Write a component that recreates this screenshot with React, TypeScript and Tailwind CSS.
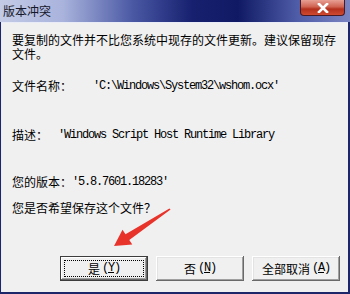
import React from "react";

const cjk = "font-['SimSun','Noto_Sans_CJK_SC',sans-serif]";
const mono = "font-['Liberation_Mono',monospace] tracking-[-1.2px]";

function Btn({ label, hot, isDefault }: { label: string; hot: string; isDefault?: boolean }) {
  return (
    <button
      className={`relative w-[88px] h-[25px] bg-[#f0f0f0] text-[12px] leading-[13px] text-black flex items-center justify-center ${
        isDefault
          ? "border border-[#3c3c3c] shadow-[inset_-1px_-1px_0_#696969,inset_1px_1px_0_#ffffff,inset_-2px_-2px_0_#a0a0a0]"
          : "shadow-[inset_-1px_-1px_0_#696969,inset_1px_1px_0_#ffffff,inset_-2px_-2px_0_#a0a0a0,inset_2px_2px_0_#e3e3e3]"
      }`}
    >
      {isDefault && (
        <span className="absolute inset-[3px] border border-dotted border-black pointer-events-none" />
      )}
      <span className={cjk}>{label}</span>
      <span className={`${mono} ml-[2px]`}>
        (<span className="underline">{hot}</span>)
      </span>
    </button>
  );
}

export default function App() {
  return (
    <div className={`relative w-[350px] h-[294px] overflow-hidden bg-[#1c2668] flex flex-col ${cjk}`}>
      {/* title bar */}
      <div className="h-[22px] flex justify-between bg-[linear-gradient(90deg,#c3cbe6_0%,#a9b3dc_18%,#4a58a4_38%,#16206e_55%,#101a64_68%,#4f5ca8_85%,#7a84c2_100%)]">
        <div className="pl-[3px] pt-[4px] text-[12px] leading-[14px] text-[#15182a]">版本冲突</div>
        <div className="mr-[5px] w-[45px] h-[16px] rounded-b-[4px] border border-t-0 border-[#4a1a24] bg-[linear-gradient(180deg,#e7a094_0%,#d06352_45%,#b3301d_60%,#cf4a30_100%)] flex items-center justify-center">
          <svg width="12" height="10" viewBox="0 0 12 10">
            <path d="M2 1 L10 9 M10 1 L2 9" stroke="#ffffff" strokeWidth="2.6" strokeLinecap="square" />
          </svg>
        </div>
      </div>

      {/* body */}
      <div className="flex-1 ml-[1px] mr-[2px] mb-[2px] bg-[#f0f0f0] border-l border-t border-[#e9ecf6] flex flex-col pl-[10px] pr-[8px] pt-[10px] text-[12px] leading-[14px] text-black">
        <div>要复制的文件并不比您系统中现存的文件更新。建议保留现存</div>
        <div>文件。</div>
        <div className="mt-[18px] flex">
          <span className="w-[81px]">文件名称：</span>
          <span className={mono}>{"'C:\\Windows\\System32\\wshom.ocx'"}</span>
        </div>
        <div className="mt-[35px] flex">
          <span className="w-[46px]">描述：</span>
          <span className={mono}>'Windows Script Host Runtime Library</span>
        </div>
        <div className="mt-[33px] flex">
          <span className="w-[60px]">您的版本：</span>
          <span className={mono}>'5.8.7601.18283'</span>
        </div>
        <div className="mt-[12px]">您是否希望保存这个文件？</div>
        <div className="mt-[41px] flex justify-end gap-[8px]">
          <Btn label="是" hot="Y" isDefault />
          <Btn label="否" hot="N" />
          <Btn label="全部取消" hot="A" />
        </div>
      </div>

      {/* red arrow annotation */}
      <svg className="absolute left-0 top-0 pointer-events-none" width="350" height="294" viewBox="0 0 350 294">
        <polygon
          points="170.6,209.6 129.3,240.1 132.3,244.6 114,246 122.5,229.8 125.5,234.3 169.4,208.4"
          fill="#e8332b"
        />
      </svg>
    </div>
  );
}
